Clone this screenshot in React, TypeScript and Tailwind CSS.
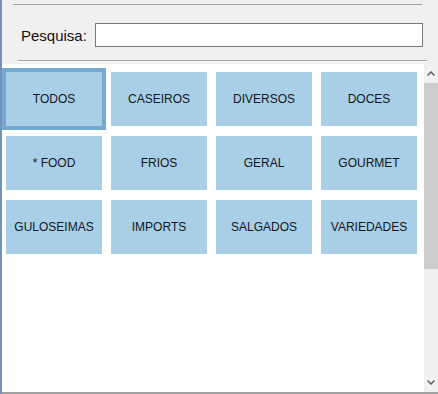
export default function App() {
  const groups = [
    "TODOS",
    "CASEIROS",
    "DIVERSOS",
    "DOCES",
    "* FOOD",
    "FRIOS",
    "GERAL",
    "GOURMET",
    "GULOSEIMAS",
    "IMPORTS",
    "SALGADOS",
    "VARIEDADES",
  ];

  return (
    <div
      className="w-[438px] h-[394px] bg-[#f0f0f0] border-l-2 border-[#7393b8] flex flex-col overflow-hidden"
      style={{ fontFamily: '"Liberation Sans", Arial, sans-serif' }}
    >
      {/* search header */}
      <div className="h-[64px] shrink-0 flex flex-col">
        <div className="mt-[4px] ml-[11px] mr-[16px] h-px bg-[#a0a0a0]" />
        <div className="mt-[18px] h-[24px] flex items-center gap-2 ml-[19px] mr-[15px]">
          <span className="text-[15px] text-[#111] leading-none">Pesquisa:</span>
          <input
            className="ml-auto w-[330px] h-[24px] bg-white border border-[#7a7a7a] outline-none px-1 text-[13px]"
            defaultValue=""
          />
        </div>
        <div className="mt-[13px] ml-[16px] mr-[11px] h-px bg-[#a0a0a0]" />
        <div className="ml-[16px] mr-[11px] h-px bg-white" />
      </div>

      {/* list + scrollbar */}
      <div className="flex-1 flex border-b-2 border-[#a0a0a0]">
        <div className="w-[422px] bg-white pl-[4px] pt-[8px]">
          <div className="grid grid-cols-[repeat(4,96px)] auto-rows-[54px] gap-x-[9px] gap-y-[10px]">
            {groups.map((g, i) => (
              <div
                key={g}
                className={
                  "flex items-center justify-center bg-[#a9cfe6] text-[12px] text-[#151520] " +
                  (i === 0 ? "outline-4 outline-solid outline-[#74a9d1]" : "")
                }
              >
                {g}
              </div>
            ))}
          </div>
        </div>

        {/* scrollbar */}
        <div className="w-[14px] bg-[#f0f0f0] flex flex-col items-center">
          <div className="h-[19px] w-full flex items-center justify-center">
            <svg width="8" height="5" viewBox="0 0 8 5">
              <path d="M0.5 4.5 L4 1 L7.5 4.5" fill="none" stroke="#606060" strokeWidth="1.5" />
            </svg>
          </div>
          <div className="w-full h-[186px] bg-[#cdcdcd]" />
          <div className="flex-1" />
          <div className="h-[19px] w-full flex items-center justify-center">
            <svg width="8" height="5" viewBox="0 0 8 5">
              <path d="M0.5 0.5 L4 4 L7.5 0.5" fill="none" stroke="#606060" strokeWidth="1.5" />
            </svg>
          </div>
        </div>
      </div>
    </div>
  );
}
